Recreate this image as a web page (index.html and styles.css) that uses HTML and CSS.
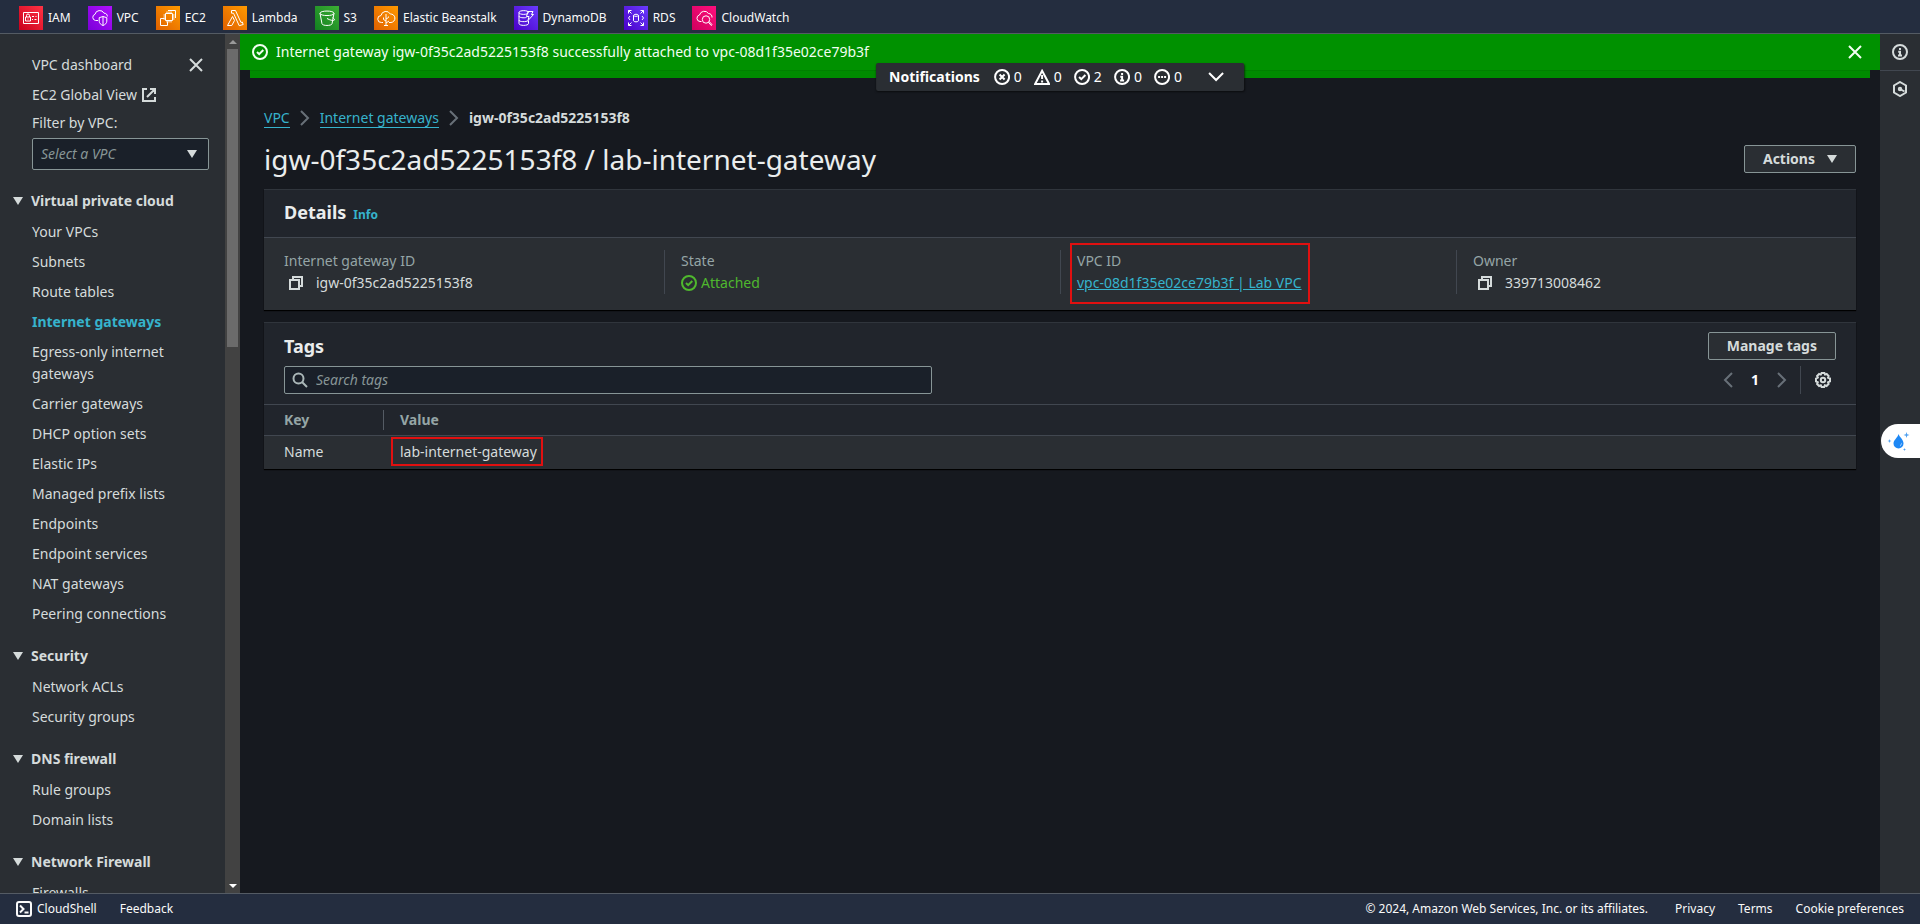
FILE: index.html
```html
<!DOCTYPE html>
<html lang="en">
<head>
<meta charset="utf-8">
<title>igw-0f35c2ad5225153f8 | VPC Console</title>
<link rel="stylesheet" href="styles.css">
</head>
<body>
<svg class="defs" aria-hidden="true">
  <defs>
    <linearGradient id="g-red" x1="0" y1="1" x2="1" y2="0"><stop offset="0" stop-color="#c8001c"/><stop offset="1" stop-color="#ff3344"/></linearGradient>
    <linearGradient id="g-purple" x1="0" y1="1" x2="1" y2="0"><stop offset="0" stop-color="#7a00d8"/><stop offset="1" stop-color="#b010ff"/></linearGradient>
    <linearGradient id="g-orange" x1="0" y1="1" x2="1" y2="0"><stop offset="0" stop-color="#e06000"/><stop offset="1" stop-color="#ff9a00"/></linearGradient>
    <linearGradient id="g-green" x1="0" y1="1" x2="1" y2="0"><stop offset="0" stop-color="#128020"/><stop offset="1" stop-color="#3cae34"/></linearGradient>
    <linearGradient id="g-blue" x1="0" y1="1" x2="1" y2="0"><stop offset="0" stop-color="#4a00c8"/><stop offset="1" stop-color="#6a3cff"/></linearGradient>
    <linearGradient id="g-pink" x1="0" y1="1" x2="1" y2="0"><stop offset="0" stop-color="#d0005e"/><stop offset="1" stop-color="#ff0f7d"/></linearGradient>
    <symbol id="i-check" viewBox="0 0 16 16"><circle cx="8" cy="8" r="7"/><path d="m5 8 2.200 2.200L11.300 6"/></symbol>
    <symbol id="i-error" viewBox="0 0 16 16"><circle cx="8" cy="8" r="7"/><path d="m5.500 5.500 5 5m0-5-5 5"/></symbol>
    <symbol id="i-warn" viewBox="0 0 16 16"><path d="M8 1.800 15 15H1z"/><path d="M8 6v4m0 1.500v2"/></symbol>
    <symbol id="i-info" viewBox="0 0 16 16"><circle cx="8" cy="8" r="7"/><path d="M8 4v2M6.200 7.800H8v3.700m-2 0h4"/></symbol>
    <symbol id="i-pending" viewBox="0 0 16 16"><circle cx="8" cy="8" r="7"/><path d="M4 8h2m1 0h2m1 0h2"/></symbol>
    <symbol id="i-close" viewBox="0 0 16 16"><path d="m2 2 12 12M14 2 2 14"/></symbol>
    <symbol id="i-caret" viewBox="0 0 10 8"><path d="M0 0h10L5 8z"/></symbol>
    <symbol id="i-right" viewBox="0 0 10 16"><path d="m1 1 7 7-7 7"/></symbol>
    <symbol id="i-copy" viewBox="0 0 16 16"><path d="M2 5h9v9H2z"/><path d="M5 5V2h9v9h-3"/></symbol>
  </defs>
</svg>

<header class="topbar">
  <a class="service" href="#iam"><svg class="service-icon" viewBox="0 0 24 24"><path class="tile" fill="url(#g-red)" d="M0 0h24v24H0z"/><path d="M4.500 6.500h15v11h-15zM6.500 11h5v4h-5zM7.500 11V9.500a1.500 1.500 0 0 1 3 0V11M9 12.500v1M13 10.500h2m1.500 0h1M13 13.500h1m1.500 0h2"/></svg>IAM</a>
  <a class="service" href="#vpc"><svg class="service-icon" viewBox="0 0 24 24"><path class="tile" fill="url(#g-purple)" d="M0 0h24v24H0z"/><path d="M10 14.500H7.500A3.200 3.200 0 0 1 7 8.300 4.800 4.800 0 0 1 16 7.200a3 3 0 0 1 3.300 3.300M15 10.500l3.800 1.200v3.500c0 2-1.500 3.300-3.800 4.300-2.300-1-3.800-2.300-3.800-4.300v-3.500zM15 10.500v9"/></svg>VPC</a>
  <a class="service" href="#ec2"><svg class="service-icon" viewBox="0 0 24 24"><path class="tile" fill="url(#g-orange)" d="M0 0h24v24H0z"/><path d="M9.500 7.500h7v7h-7zM11 7.500v-2m2 2v-2m2 2v-2M11 16.500v-2m2 2v-2m2 2v-2M7.500 9h2m-2 2h2m-2 2h2M16.500 9h2m-2 2h2m-2 2h2M8.500 12.500h-4v7h7v-4M12 4.500h7.500v7.500"/></svg>EC2</a>
  <a class="service" href="#lambda"><svg class="service-icon" viewBox="0 0 24 24"><path class="tile" fill="url(#g-orange)" d="M0 0h24v24H0z"/><path d="M8.500 4.500h4l5.500 12 1.300-.5.900 2.500-4 1.200-5.700-12.500h-2zM9.500 10.500l2 4-2.700 5H4.500z"/></svg>Lambda</a>
  <a class="service" href="#s3"><svg class="service-icon" viewBox="0 0 24 24"><path class="tile" fill="url(#g-green)" d="M0 0h24v24H0z"/><path d="M5 7.300c0-3 14-3 14 0s-14 3-14 0l2 10.500c.5 2.200 9.500 2.200 10 0L19 7.300M12 12.500c4 2.200 7.500 2.500 7.500 1.200 0-.8-1-1.500-2-2M12 12.500h.3"/></svg>S3</a>
  <a class="service" href="#eb"><svg class="service-icon" viewBox="0 0 24 24"><path class="tile" fill="url(#g-orange)" d="M0 0h24v24H0z"/><path d="M9 16.500H7.500a3.500 3.500 0 0 1-.5-7A5 5 0 0 1 16.300 8a3.800 3.800 0 0 1 .7 8.500h-2M12 8v11.500M12 15l-2.500-1.500v-2M12 13l2.500-1.500v-1M12 17l3-2M10 19.500h4"/></svg>Elastic Beanstalk</a>
  <a class="service" href="#dynamodb"><svg class="service-icon" viewBox="0 0 24 24"><path class="tile" fill="url(#g-blue)" d="M0 0h24v24H0z"/><path d="M5 6.500c0-2.500 9.500-2.500 9.500 0s-9.500 2.500-9.500 0v11c0 2.500 9.500 2.500 9.500 0V15M5 10c0 1.800 5 2.200 7.500 1.400M5 14c0 2 7 2.200 9.500.5M14 5.500h5l-1.500 3h2l-5.500 6 1-4h-2.500z"/></svg>DynamoDB</a>
  <a class="service" href="#rds"><svg class="service-icon" viewBox="0 0 24 24"><path class="tile" fill="url(#g-blue)" d="M0 0h24v24H0z"/><path d="M9.500 9.300c0-1.400 5-1.400 5 0s-5 1.400-5 0v5.500c0 1.400 5 1.400 5 0V9.300M4.500 7.500v-3h3M4.500 4.500l3 3M16.500 4.500h3v3M19.500 4.500l-3 3M4.500 16.500v3h3M4.500 19.500l3-3M19.500 16.500v3h-3M19.500 19.500l-3-3M6 10l-1.500 2L6 14M18 10l1.500 2-1.500 2"/></svg>RDS</a>
  <a class="service" href="#cloudwatch"><svg class="service-icon" viewBox="0 0 24 24"><path class="tile" fill="url(#g-pink)" d="M0 0h24v24H0z"/><path d="M9.500 15.500H8a3.300 3.300 0 0 1-.5-6.500A5 5 0 0 1 16.500 7.500 3.500 3.500 0 0 1 20 11.500"/><circle cx="14" cy="13.500" r="3.700"/><path d="m16.500 16.300 2.700 3.200.9-.8-2.900-3.200"/></svg>CloudWatch</a>
</header>

<div class="shell">
  <nav class="sidebar" aria-label="VPC">
    <div class="side-content">
      <div class="side-top">
        <a href="#dashboard">VPC dashboard</a>
        <button class="icon-button" aria-label="Close navigation"><svg class="icon line"><use href="#i-close"/></svg></button>
      </div>
      <a class="side-link" href="#ec2-global">EC2 Global View
        <svg class="icon line" viewBox="0 0 16 16"><path d="M6 2H2v12h12v-4M9 2h5v5M14 2 6 10"/></svg></a>
      <label class="filter-label" for="vpc-filter">Filter by VPC:</label>
      <div class="select-wrap">
        <select id="vpc-filter"><option>Select a VPC</option></select>
        <svg class="caret"><use href="#i-caret"/></svg>
      </div>
      <section>
        <h3><svg class="caret"><use href="#i-caret"/></svg>Virtual private cloud</h3>
        <ul>
          <li><a href="#vpcs">Your VPCs</a></li>
          <li><a href="#subnets">Subnets</a></li>
          <li><a href="#routes">Route tables</a></li>
          <li><a class="current" href="#igw">Internet gateways</a></li>
          <li><a href="#eigw">Egress-only internet gateways</a></li>
          <li><a href="#cgw">Carrier gateways</a></li>
          <li><a href="#dhcp">DHCP option sets</a></li>
          <li><a href="#eip">Elastic IPs</a></li>
          <li><a href="#prefix">Managed prefix lists</a></li>
          <li><a href="#endpoints">Endpoints</a></li>
          <li><a href="#endpoint-services">Endpoint services</a></li>
          <li><a href="#nat">NAT gateways</a></li>
          <li><a href="#peering">Peering connections</a></li>
        </ul>
      </section>
      <section>
        <h3><svg class="caret"><use href="#i-caret"/></svg>Security</h3>
        <ul>
          <li><a href="#acls">Network ACLs</a></li>
          <li><a href="#sg">Security groups</a></li>
        </ul>
      </section>
      <section>
        <h3><svg class="caret"><use href="#i-caret"/></svg>DNS firewall</h3>
        <ul>
          <li><a href="#rules">Rule groups</a></li>
          <li><a href="#domains">Domain lists</a></li>
        </ul>
      </section>
      <section>
        <h3><svg class="caret"><use href="#i-caret"/></svg>Network Firewall</h3>
        <ul>
          <li><a href="#firewalls">Firewalls</a></li>
        </ul>
      </section>
    </div>
    <div class="scrollbar" aria-hidden="true">
      <svg class="arrow up" viewBox="0 0 8 4"><path d="M0 4h8L4 0z"/></svg>
      <div class="track"><div class="thumb"></div></div>
      <svg class="arrow" viewBox="0 0 8 4"><path d="M0 0h8L4 4z"/></svg>
    </div>
  </nav>

  <div class="main-column">
    <div class="flash-stack">
      <div class="flash" role="status">
        <svg class="icon line"><use href="#i-check"/></svg>
        <span class="flash-text">Internet gateway igw-0f35c2ad5225153f8 successfully attached to vpc-08d1f35e02ce79b3f</span>
        <button class="icon-button" aria-label="Dismiss"><svg class="icon line"><use href="#i-close"/></svg></button>
      </div>
      <div class="flash-behind"></div>
      <button class="notifications">
        <b>Notifications</b>
        <span class="counts">
          <span><svg class="icon line"><use href="#i-error"/></svg>0</span>
          <span><svg class="icon line"><use href="#i-warn"/></svg>0</span>
          <span><svg class="icon line"><use href="#i-check"/></svg>2</span>
          <span><svg class="icon line"><use href="#i-info"/></svg>0</span>
          <span><svg class="icon line"><use href="#i-pending"/></svg>0</span>
        </span>
        <svg class="icon line" viewBox="0 0 16 16"><path d="m1 4 7 7 7-7"/></svg>
      </button>
    </div>

    <main>
      <nav class="breadcrumbs" aria-label="Breadcrumbs">
        <a href="#vpc">VPC</a>
        <svg class="chevron"><use href="#i-right"/></svg>
        <a href="#igws">Internet gateways</a>
        <svg class="chevron"><use href="#i-right"/></svg>
        <b>igw-0f35c2ad5225153f8</b>
      </nav>
      <div class="page-head">
        <h1>igw-0f35c2ad5225153f8 / lab-internet-gateway</h1>
        <button class="button">Actions <svg class="caret"><use href="#i-caret"/></svg></button>
      </div>

      <section class="card">
        <div class="card-head">
          <h2>Details</h2>
          <a class="info" href="#info">Info</a>
        </div>
        <dl class="details">
          <div>
            <dt>Internet gateway ID</dt>
            <dd class="copyable"><button class="icon-button" aria-label="Copy gateway ID"><svg class="icon line"><use href="#i-copy"/></svg></button>igw-0f35c2ad5225153f8</dd>
          </div>
          <div>
            <dt>State</dt>
            <dd class="state"><svg class="icon line"><use href="#i-check"/></svg>Attached</dd>
          </div>
          <div>
            <dt>VPC ID</dt>
            <dd class="vpc-id"><a href="#vpc-08d1f35e02ce79b3f">vpc-08d1f35e02ce79b3f | Lab VPC</a></dd>
          </div>
          <div>
            <dt>Owner</dt>
            <dd class="copyable"><button class="icon-button" aria-label="Copy owner"><svg class="icon line"><use href="#i-copy"/></svg></button>339713008462</dd>
          </div>
        </dl>
      </section>

      <section class="card">
        <div class="tags-head">
          <h2>Tags</h2>
          <button class="button">Manage tags</button>
        </div>
        <div class="tags-tools">
          <label class="search">
            <svg class="icon line" viewBox="0 0 16 16"><circle cx="6.500" cy="6.500" r="5"/><path d="m10 10 5 5"/></svg>
            <input type="search" placeholder="Search tags" aria-label="Search tags">
          </label>
          <div class="pager">
            <button class="icon-button" aria-label="Previous page"><svg class="chevron prev"><use href="#i-right"/></svg></button>
            <b>1</b>
            <button class="icon-button" aria-label="Next page"><svg class="chevron"><use href="#i-right"/></svg></button>
            <span class="pager-end">
              <button class="icon-button" aria-label="Preferences"><svg class="icon line" viewBox="0 0 16 16"><path d="M6.600 1h2.800l.6 1.600 1.700-.6 1.900 2-.6 1.600 2 .9v2.900l-2 .9.600 1.700-2 2-1.700-.7-.7 1.700H6.600l-.8-1.700-1.700.7-2-2 .7-1.700L1 9.400V6.500l1.800-.9L2.100 4l2-2 1.700.6z"/><circle cx="8" cy="8" r="2.200"/></svg></button>
            </span>
          </div>
        </div>
        <table>
          <thead><tr><th scope="col"><span>Key</span></th><th scope="col">Value</th></tr></thead>
          <tbody><tr><td>Name</td><td><span class="marked">lab-internet-gateway</span></td></tr></tbody>
        </table>
      </section>
    </main>
  </div>

  <aside class="rail">
    <button aria-label="Info panel"><svg class="icon line"><use href="#i-info"/></svg></button>
    <button aria-label="Diagnostics"><svg class="icon line" viewBox="0 0 16 16"><path d="m8 1 6 3.500v7L8 15l-6-3.500v-7zM8 8l4.500 2.500"/><circle cx="8" cy="8" r="1.200"/></svg></button>
  </aside>
  <button class="assistant" aria-label="Assistant"><svg viewBox="0 0 24 20"><path fill="#1e88f5" d="M12.500 3c.8 3 5 5.300 5 9.500a5 5 0 0 1-10 0C7.500 9 11.500 7 12.500 3z"/><path fill="#fff" d="M15.300 11.500c.6 1.700 0 3.300-1.500 4 .9-1.200 1.200-2.600 1.500-4z"/><path fill="#4c9ff0" d="m20.500 1 .7 2.300 2.300.7-2.300.7-.7 2.300-.7-2.300-2.300-.7 2.300-.7zM3.500 8l.5 1.500 1.500.5-1.500.5-.5 1.500-.5-1.500-1.500-.5L3 9.500zM18.500 17l.4 1.100 1.100.4-1.100.4-.4 1.100-.4-1.100-1.100-.4 1.100-.4z"/></svg></button>
</div>

<footer class="footer">
  <a class="cloudshell" href="#cloudshell"><svg class="icon line" viewBox="0 0 16 16"><rect x="1" y="1" width="14" height="14" rx="2"/><path d="m4 4.500 3.500 3.500L4 11.500M8.500 11.500h4"/></svg>CloudShell</a>
  <a href="#feedback">Feedback</a>
  <span class="legal">© 2024, Amazon Web Services, Inc. or its affiliates.</span>
  <a href="#privacy">Privacy</a>
  <a href="#terms">Terms</a>
  <a href="#cookies">Cookie preferences</a>
</footer>
</body>
</html>
```

FILE: styles.css
```css
:root {
  --bg: #16191f;
  --panel: #2a2e33;
  --panel-head: #21252c;
  --text: #d5dbdb;
  --bright: #eaeded;
  --muted: #95a5a6;
  --rule: #414750;
  --outline: #879596;
  --link: #36b3cc;
}

* { box-sizing: border-box; }

body {
  margin: 0;
  height: 100vh;
  display: flex;
  flex-direction: column;
  overflow: hidden;
  background: var(--bg);
  color: var(--text);
  font-family: "Noto Sans", "Open Sans", sans-serif;
  font-size: 14px;
  line-height: 22px;
}

h1, h2, h3, ul, dl, dd { margin: 0; padding: 0; }
ul { list-style: none; }
a { color: inherit; text-decoration: none; }
button { font: inherit; color: inherit; cursor: pointer; }
.defs { position: absolute; width: 0; height: 0; }

.icon { width: 16px; height: 16px; flex: none; }
.line { fill: none; stroke: currentColor; stroke-width: 2; }
.caret { width: 10px; height: 8px; flex: none; fill: currentColor; }
.chevron { width: 10px; height: 16px; flex: none; fill: none; stroke: #687078; stroke-width: 2; }
.prev { transform: rotate(180deg); }
.icon-button { display: flex; padding: 0; border: 0; background: none; }

.topbar {
  flex: none;
  display: flex;
  align-items: center;
  gap: 17px;
  height: 34px;
  padding: 3px 19px 0;
  background: #242d3f;
  border-bottom: 1px solid #545b64;
  color: #fafafa;
  font-size: 12px;
}
.service { display: flex; align-items: center; gap: 5px; white-space: nowrap; }
.service-icon { width: 24px; height: 24px; fill: none; stroke: #fff; stroke-width: 1; }
.service-icon .tile { stroke: none; }

.shell { position: relative; flex: 1; min-height: 0; display: flex; }

.sidebar { flex: none; width: 240px; display: flex; background: var(--panel); }
.side-content { flex: 1; min-width: 0; overflow: hidden; padding: 20px 16px 0 32px; }
.side-top { display: flex; justify-content: space-between; align-items: center; padding-right: 5px; }
.side-link { display: flex; align-items: center; gap: 4px; margin-top: 8px; }
.filter-label { display: block; margin: 6px 0 4px; }
.select-wrap { position: relative; }
.select-wrap select {
  display: block;
  width: 100%;
  height: 32px;
  padding: 0 8px;
  appearance: none;
  background: #1a2029;
  border: 1px solid var(--outline);
  border-radius: 2px;
  color: var(--outline);
  font: inherit;
  font-style: italic;
}
.select-wrap .caret { position: absolute; right: 12px; top: 12px; pointer-events: none; }
.side-content section { margin-top: 20px; }
.side-content h3 {
  display: flex;
  align-items: center;
  gap: 8px;
  margin: 0 0 9px -19px;
  font-size: 14px;
}
.side-content ul { display: grid; gap: 8px; }
.current { color: var(--link); font-weight: 700; }

.scrollbar {
  flex: none;
  width: 15px;
  display: flex;
  flex-direction: column;
  align-items: center;
  background: #424242;
}
.arrow { width: 8px; height: 4px; margin: 6px 0 5px; fill: #fff; }
.arrow.up { fill: #9a9a9a; }
.track { flex: 1; width: 11px; }
.thumb { height: 36%; background: #6b6b6b; }

.main-column { flex: 1; min-width: 0; }
.flash-stack { position: relative; height: 44px; color: #f2fff2; }
.flash {
  display: flex;
  align-items: center;
  gap: 8px;
  height: 36px;
  padding: 0 17px 0 12px;
  background: #009100;
}
.flash-text { flex: 1; }
.flash-behind { height: 8px; margin: 0 10px; background: #008a00; border-top: 1px solid #007f00; }
.notifications {
  position: absolute;
  left: 50%;
  top: 29px;
  transform: translateX(-50%);
  display: flex;
  align-items: center;
  gap: 14px;
  height: 28px;
  padding: 0 20px 0 13px;
  background: var(--panel);
  border: 0;
  border-radius: 2px;
  box-shadow: 0 1px 2px #0008;
  color: #fff;
  white-space: nowrap;
}
.counts { display: flex; gap: 12px; margin-right: 12px; }
.counts > span { display: flex; align-items: center; gap: 4px; }

main { padding: 29px 24px 0; }
.breadcrumbs { display: flex; align-items: center; gap: 10px; }
.breadcrumbs a { color: var(--link); border-bottom: 1px solid; line-height: 18px; }
.page-head { display: flex; align-items: center; justify-content: space-between; margin: 12px 0; }
h1 { font-size: 28px; line-height: 36px; font-weight: 400; color: var(--bright); }
.button {
  display: flex;
  align-items: center;
  justify-content: center;
  gap: 12px;
  height: 28px;
  padding: 0 18px;
  background: var(--panel);
  border: 1px solid var(--outline);
  border-radius: 2px;
  font-weight: 700;
}

.card { background: var(--panel-head); border-top: 1px solid #30353c; box-shadow: 0 1px 1px #000; }
.card + .card { margin-top: 12px; }
h2 { font-size: 18px; line-height: 22px; color: var(--bright); }
.card-head { display: flex; align-items: baseline; gap: 7px; padding: 11px 20px; }
.info { color: var(--link); font-size: 12px; font-weight: 700; }
.details {
  display: grid;
  grid-template-columns: repeat(4, 1fr);
  column-gap: 32px;
  padding: 12px 20px 16px;
  background: var(--panel);
  border-top: 1px solid var(--rule);
}
.details > div + div { margin-left: -16px; padding-left: 16px; border-left: 1px solid var(--rule); }
dt { color: var(--muted); }
.copyable { display: flex; align-items: center; gap: 12px; padding-left: 4px; }
.state { display: flex; align-items: center; gap: 4px; color: #4fb82e; }
.vpc-id { position: relative; width: max-content; }
.vpc-id a { color: var(--link); text-decoration: underline; }
.vpc-id::after { content: ""; position: absolute; inset: -29px -8px -10px -7px; border: 2px solid #e01010; }

.tags-head { display: flex; align-items: center; justify-content: space-between; padding: 9px 20px 6px; }
.tags-tools { display: flex; justify-content: space-between; padding: 0 20px 10px; }
.search {
  display: flex;
  align-items: center;
  gap: 8px;
  width: 648px;
  height: 28px;
  padding: 0 7px;
  background: #1a2029;
  border: 1px solid var(--outline);
  border-radius: 2px;
  color: #aab7b8;
}
.search input { flex: 1; border: 0; padding: 0; background: none; outline: 0; color: var(--text); font: inherit; }
.search input::placeholder { color: var(--outline); font-style: italic; }
.pager { display: flex; align-items: center; gap: 18px; color: #fff; }
.pager-end { display: flex; align-items: center; height: 28px; margin-left: -5px; padding: 0 5px 0 14px; border-left: 1px solid var(--rule); color: var(--text); }

table { width: 100%; border-collapse: collapse; border-top: 1px solid var(--rule); text-align: left; }
th { height: 31px; padding: 0 0 0 16px; color: var(--muted); }
td { height: 33px; padding: 0 0 0 16px; background: var(--panel); border-top: 1px solid var(--rule); }
th:first-child, td:first-child { width: 120px; padding-left: 20px; }
th span { display: block; line-height: 20px; border-right: 1px solid #545b64; }
.marked { position: relative; }
.marked::after { content: ""; position: absolute; inset: -5px -6px -5px -9px; border: 2px solid #e01010; }

.rail { flex: none; width: 40px; background: var(--panel); }
.rail button {
  display: flex;
  align-items: center;
  justify-content: center;
  width: 100%;
  height: 37px;
  padding: 0;
  background: none;
  border: 0;
  border-bottom: 1px solid #414750;
}
.rail button:last-child { border-color: transparent; }
.assistant {
  position: absolute;
  right: 0;
  top: 390px;
  width: 39px;
  height: 34px;
  padding: 7px 10px 7px 5px;
  background: #fff;
  border: 0;
  border-radius: 17px 0 0 17px;
}
.assistant svg { display: block; width: 24px; height: 20px; }

.footer {
  flex: none;
  display: flex;
  align-items: center;
  gap: 23px;
  height: 31px;
  padding: 0 16px;
  background: #242d3f;
  border-top: 1px solid #545b64;
  color: #fafafa;
  font-size: 12px;
}
.cloudshell { display: flex; align-items: center; gap: 5px; }
.legal { margin: 0 4px 0 auto; }
```
